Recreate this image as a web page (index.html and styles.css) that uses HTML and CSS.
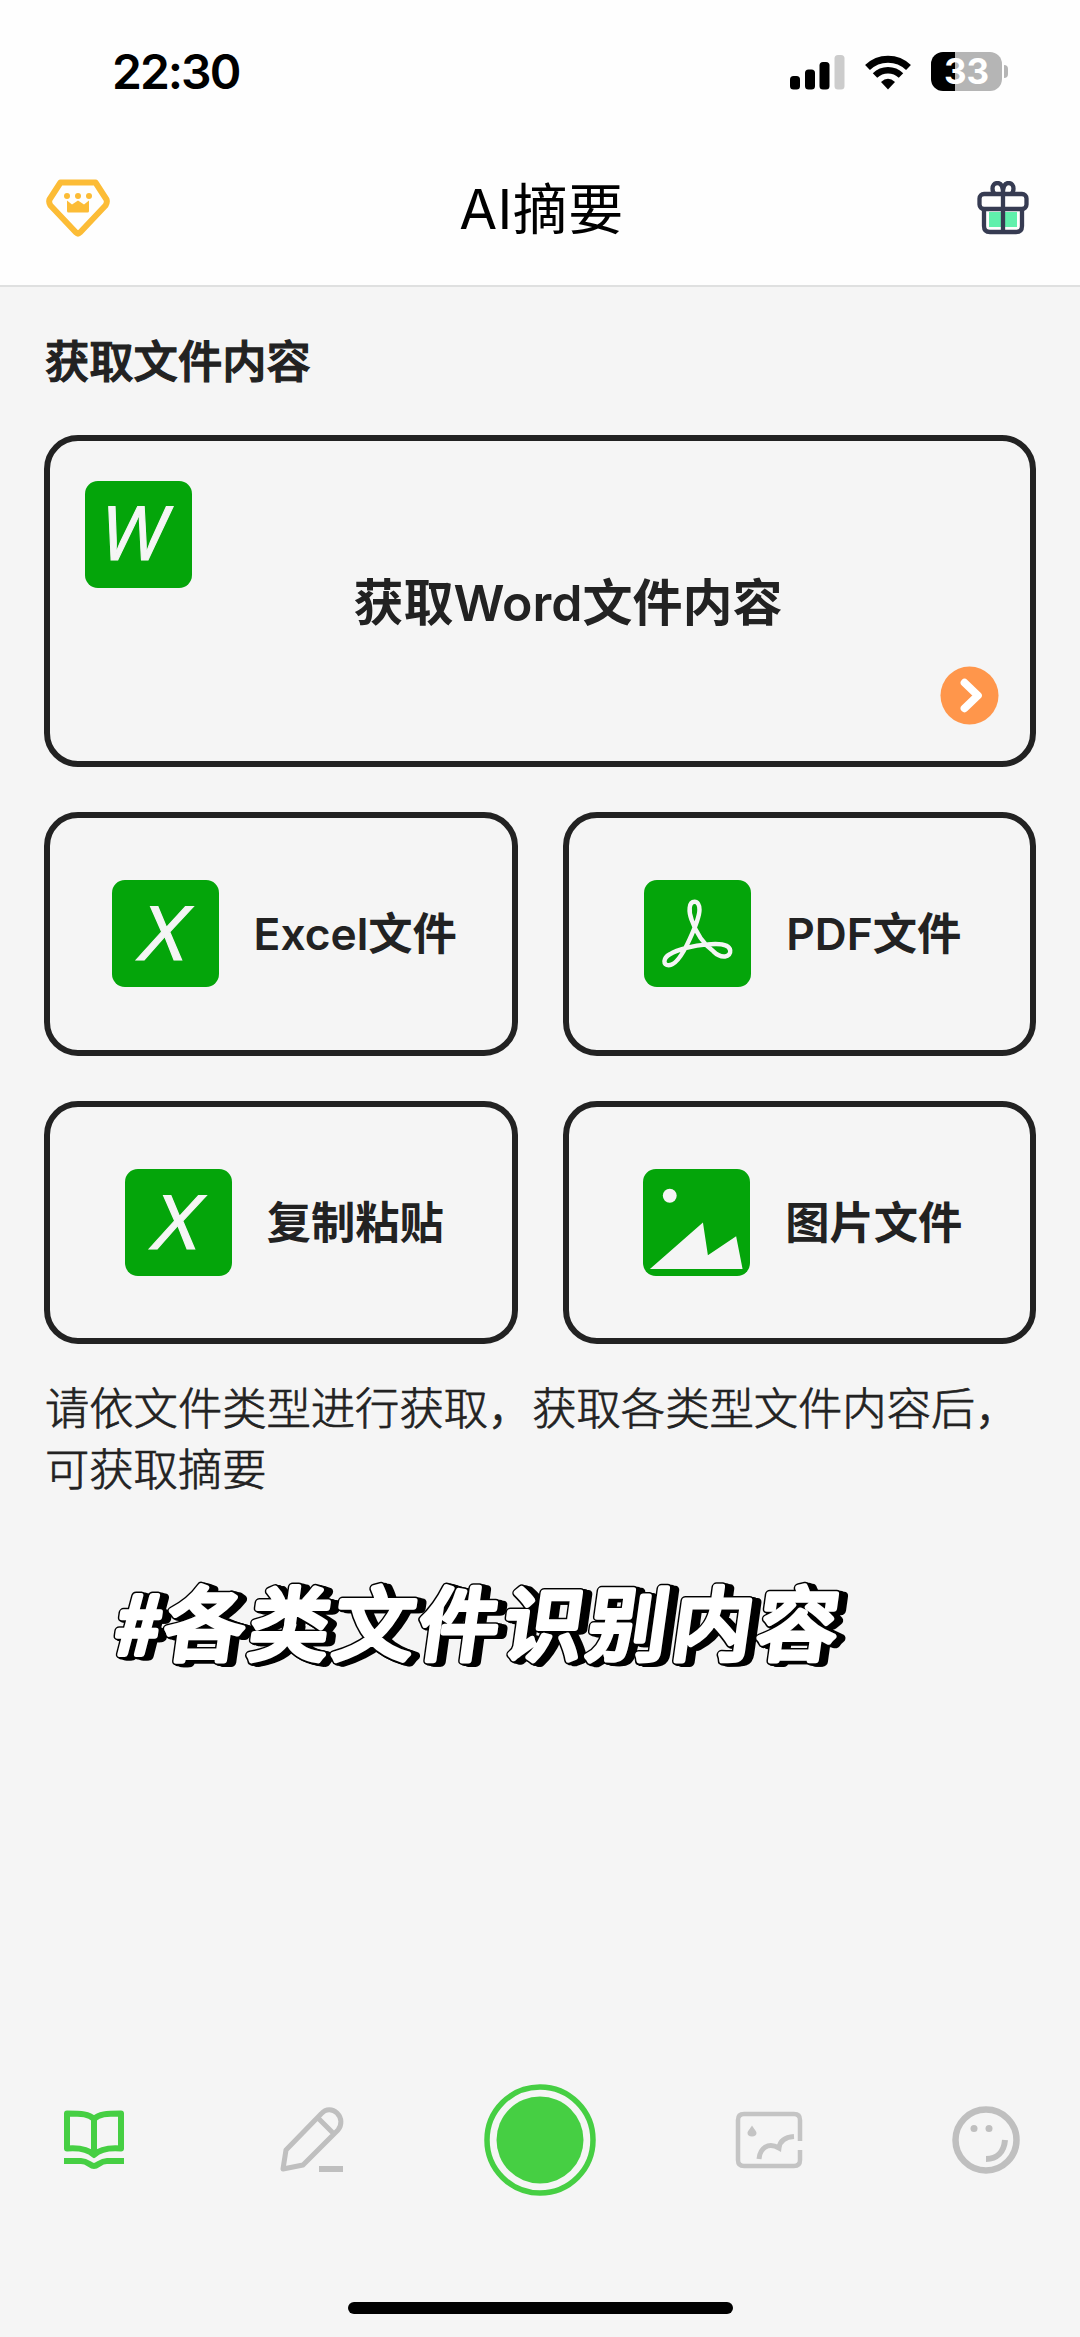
FILE: index.html
```html
<!DOCTYPE html>
<html lang="zh-CN">

<head>
  <meta charset="utf-8" />
  <title>AI摘要</title>
  <meta name="viewport" content="width=device-width, initial-scale=1" />
  <link rel="stylesheet" href="styles.css">
</head>

<body>
  <header class="header">
    <div class="status">
      <span class="status-time">22:30</span>
      <div class="status-icons">
        <svg class="signal" width="55" height="36" viewBox="0 0 55 36">
          <rect x="0" y="22" width="10" height="13.500" rx="3.500" />
          <rect x="15" y="15.500" width="10" height="20" rx="3.500" />
          <rect x="29.500" y="8" width="10" height="27.500" rx="3.500" />
          <rect x="44.500" y="1" width="10" height="34.500" rx="3.500" fill="#ccc" />
        </svg>
        <svg class="wifi" width="46" height="36" viewBox="0 0 46 36">
          <path d="M2.500 13.500 A29.500 29.500 0 0 1 43.500 13.500" fill="none" stroke="#000" stroke-width="7" />
          <path d="M10 21.500 A19 19 0 0 1 36 21.500" fill="none" stroke="#000" stroke-width="6.500" />
          <path d="M16 28 Q23 21.500 30 28 L23 35.500 Z" />
        </svg>
        <div class="battery"><span class="battery-level">33</span></div>
      </div>
    </div>
    <div class="navbar">
      <svg width="64" height="58" viewBox="0 0 64 58">
        <path d="M14.500 3.500 H49.500 L60.500 20.500 Q61.500 23.500 59.500 26.500 L34 53.500 Q32 55.500 30 53.500 L4.500 26.500 Q2.500 23.500 3.500 20.500 Z" fill="none" stroke="#fcbc36" stroke-width="6" stroke-linejoin="round" />
        <g fill="#fcbc36">
          <circle cx="21" cy="17" r="3" />
          <circle cx="32" cy="17" r="3" />
          <circle cx="43" cy="17" r="3" />
          <path d="M21 21.500 L26 25.500 L32 21.500 L38 25.500 L43 21.500 V32 Q43 33.500 41.500 33.500 H22.500 Q21 33.500 21 32 Z" />
        </g>
      </svg>
      <h1 class="navbar-title">AI摘要</h1>
      <svg width="52" height="54" viewBox="0 0 52 54">
        <path d="M12 31 H40 V46 H12 Z" fill="#60f0ac" />
        <g fill="none" stroke="#363b52" stroke-width="4.300">
          <rect x="2.500" y="13" width="47" height="15" rx="4.500" />
          <path d="M7 28 V45 Q7 51 13 51 H39 Q45 51 45 45 V28" />
          <path d="M26 12 V51 M26 12 C26 5 23.500 2 20.500 2 C17 2 15.500 5 15.500 7.500 C15.500 10 16.500 12 18 13 M26 12 C26 5 28.500 2 31.500 2 C35 2 36.500 5 36.500 7.500 C36.500 10 35.500 12 34 13" />
        </g>
      </svg>
    </div>
  </header>

  <main class="content">
    <h2 class="section-title">获取文件内容</h2>

    <div class="cards">
      <div class="card card-wide">
        <svg class="file-icon" viewBox="0 0 108 108">
          <rect width="108" height="108" rx="13" fill="#04a50a" />
          <text class="letter" x="15.500" y="80" textLength="67" lengthAdjust="spacingAndGlyphs">W</text>
        </svg>
        <span class="card-label">获取Word文件内容</span>
        <svg class="arrow" viewBox="0 0 60 60">
          <circle cx="30" cy="30" r="29.500" fill="#ff964b" />
          <path d="M25 17 L38.500 30 L25 43" fill="none" stroke="#fff" stroke-width="8" stroke-linecap="round" stroke-linejoin="round" />
        </svg>
      </div>

      <div class="card">
        <svg class="file-icon" viewBox="0 0 108 108">
          <rect width="108" height="108" rx="13" fill="#04a50a" />
          <text class="letter" x="29" y="80.500" textLength="46" lengthAdjust="spacingAndGlyphs">X</text>
        </svg>
        <span class="card-label">Excel文件</span>
      </div>

      <div class="card">
        <svg class="file-icon" viewBox="0 0 108 108">
          <rect width="108" height="108" rx="13" fill="#04a50a" />
          <path d="M51 22 C45 22 45 32 48 40 C53 55 62 66 70 72 C78 80 88 78 87 71 C86 64 74 64 64 65 C50 66 34 70 26 75 C19 79 19 86 25 86 C33 86 41 71 46 60 C51 49 56 36 56 30 C56 25 54 22 51 22 Z" fill="none" stroke="#f5f5f5" stroke-width="4.500" />
        </svg>
        <span class="card-label">PDF文件</span>
      </div>

      <div class="card">
        <svg class="file-icon" viewBox="0 0 108 108">
          <rect width="108" height="108" rx="13" fill="#04a50a" />
          <text class="letter" x="29" y="80.500" textLength="46" lengthAdjust="spacingAndGlyphs">X</text>
        </svg>
        <span class="card-label">复制粘贴</span>
      </div>

      <div class="card">
        <svg class="file-icon" viewBox="0 0 108 108">
          <rect width="108" height="108" rx="13" fill="#04a50a" />
          <circle cx="27" cy="27" r="7" fill="#f5f5f5" />
          <path d="M7 101 L60.500 54 L65.500 87 L94 68 L100.500 101 Z" fill="#f5f5f5" />
        </svg>
        <span class="card-label">图片文件</span>
      </div>
    </div>

    <p class="hint">请依文件类型进行获取，获取各类型文件内容后，可获取摘要</p>

    <svg class="caption" width="780" height="120" viewBox="0 0 780 120">
      <defs>
        <text id="caption-text" x="12" y="89" textLength="722">#各类文件识别内容</text>
      </defs>
      <g transform="translate(0 90) skewX(-8) translate(0 -90)">
        <g class="caption-shadow">
          <use href="#caption-text" x="8" y="2" />
          <use href="#caption-text" x="6" y="1.500" />
          <use href="#caption-text" x="4" y="1" />
          <use href="#caption-text" x="2" y=".5" />
          <use href="#caption-text" />
        </g>
        <use class="caption-face" href="#caption-text" />
      </g>
    </svg>
  </main>

  <footer class="tabbar">
    <svg width="60" height="60" viewBox="0 0 60 60">
      <g fill="none" stroke="#46cf43" stroke-width="6" stroke-linejoin="round">
        <path d="M30 9 C25 4 18 3.500 3 3.500 V38.500 C16 37.500 24 39 30 45 C36 39 44 37.500 57 38.500 V3.500 C42 3.500 35 4 30 9 Z M30 8 V45" />
        <path d="M0 51 H17 C24 51 26 56 30 56 C34 56 36 51 43 51 H60" />
      </g>
    </svg>
    <svg width="64" height="66" viewBox="0 0 64 66">
      <g fill="none" stroke="#bfbfbf" stroke-width="5" stroke-linejoin="round">
        <path d="M3 62 L6 43 L41 7 C46 1 53 2 57 6 C62 11 62 18 58 23 L23 58 Z M38 11 L53 26" />
        <path d="M39 62 H63" stroke-width="6" />
      </g>
    </svg>
    <svg width="112" height="112" viewBox="0 0 112 112">
      <circle cx="56" cy="56" r="53" fill="none" stroke="#46cf43" stroke-width="5.500" />
      <circle cx="56" cy="56" r="43.500" fill="#46cf43" />
    </svg>
    <svg width="68" height="58" viewBox="0 0 68 58">
      <g fill="none" stroke="#c4c4c4" stroke-width="4.500">
        <path d="M65 30 V9 Q65 3 59 3 H9 Q3 3 3 9 V49 Q3 55 9 55 H59 Q65 55 65 49 V39" />
        <path d="M24 48 C25 37 33 31 44 37 C45 29 51 26 59 25.500" stroke-width="5" />
      </g>
      <path d="M17 14.500 C19 18 21.500 20 21.500 22 A4.500 3.500 0 0 1 12.500 22 C12.500 20 15 18 17 14.500 Z" fill="#c4c4c4" />
    </svg>
    <svg width="68" height="68" viewBox="0 0 68 68">
      <circle cx="34" cy="34" r="30.500" fill="none" stroke="#bfbfbf" stroke-width="6.500" />
      <circle cx="22" cy="22.500" r="3.500" fill="#bfbfbf" />
      <circle cx="37" cy="22.500" r="3.500" fill="#bfbfbf" />
      <path d="M53 34 C52 46 45 53 34 53" fill="none" stroke="#bfbfbf" stroke-width="6" />
    </svg>
  </footer>
  <div class="home-indicator"></div>
</body>

</html>
```
FILE: styles.css
```css
* {
  box-sizing: border-box;
}

body {
  display: flex;
  flex-direction: column;
  height: 2337px;
  margin: 0;
  background: #f5f5f5;
  color: #222;
  font-family: Inter, 'Noto Sans CJK SC', sans-serif;
}

h1,
h2,
p {
  margin: 0;
}

svg {
  display: block;
  flex: none;
}

.header {
  height: 287px;
  background: #fefefe;
  border-bottom: 2px solid #dfe0e0;
}

.status {
  display: flex;
  align-items: center;
  justify-content: space-between;
  height: 143px;
  padding: 0 78px 0 112px;
}

.status-time {
  color: #000;
  font-size: 48px;
  font-weight: 600;
  letter-spacing: -2px;
}

.status-icons {
  display: flex;
  align-items: center;
}

.wifi {
  margin: 0 20px;
}

.battery {
  position: relative;
  width: 71px;
  height: 39px;
  border-radius: 12px;
  background: linear-gradient(90deg, #000 24px, #b5b5b5 24px);
  color: #fff;
  font-size: 35px;
  font-weight: 700;
  line-height: 39px;
  text-align: center;
}

.battery::after {
  content: '';
  position: absolute;
  top: 13px;
  right: -6px;
  width: 4px;
  height: 13px;
  border-radius: 0 5px 5px 0;
  background: #b5b5b5;
}

.navbar {
  display: flex;
  align-items: center;
  justify-content: space-between;
  height: 130px;
  padding: 0 51px 0 46px;
}

.navbar-title {
  padding: 0 4px 7px 0;
  color: #000;
  font-size: 55px;
  font-weight: 400;
  letter-spacing: .5px;
}

.content {
  flex: 1;
  padding: 43px 44px 0;
}

.section-title {
  height: 64px;
  padding-left: 1px;
  font-size: 44.300px;
  font-weight: 500;
  line-height: 64px;
  -webkit-text-stroke: 1.200px #222;
}

.cards {
  display: grid;
  grid-template-columns: 1fr 1fr;
  gap: 45px;
  margin-top: 41px;
}

.card {
  display: flex;
  align-items: center;
  justify-content: center;
  gap: 35px;
  height: 243.500px;
  padding-left: 7px;
  border: 6px solid #222;
  border-radius: 34px;
  font-size: 44.300px;
  font-weight: 600;
}

.card-label {
  padding-bottom: 5px;
}

.card-wide {
  grid-column: 1 / 3;
  justify-content: space-between;
  height: 332px;
  padding: 40px 31px 36px 35px;
  font-size: 50px;
}

.card-wide .card-label {
  padding: 0 0 8px 4px;
}

.card-wide .file-icon {
  align-self: flex-start;
}

.file-icon {
  width: 107px;
  height: 107px;
}

.letter {
  fill: #f5f5f5;
  stroke: #f5f5f5;
  font-family: 'Open Sans', sans-serif;
  font-size: 75px;
  font-style: italic;
  font-weight: 400;
}

.arrow {
  align-self: flex-end;
  width: 59px;
  height: 59px;
}

.hint {
  margin-top: 35px;
  padding-left: 1px;
  font-size: 44.300px;
  font-weight: 300;
  line-height: 61px;
  -webkit-text-stroke: .7px #222;
}

.caption {
  margin: 64px 0 0 56px;
  overflow: visible;
  font-family: 'Noto Sans CJK SC', sans-serif;
  font-size: 80px;
  stroke-linejoin: round;
}

.caption-shadow {
  fill: #000;
  stroke: #000;
  stroke-width: 9px;
}

.caption-face {
  fill: #fff;
  stroke: #fff;
  stroke-width: 6px;
}

.tabbar {
  display: grid;
  grid-template-columns: 188px 247px 210px 247px 188px;
  align-items: center;
  justify-items: center;
  height: 112px;
}

.home-indicator {
  width: 385px;
  height: 12px;
  margin: 106px auto 23px;
  border-radius: 6px;
  background: #000;
}
```
